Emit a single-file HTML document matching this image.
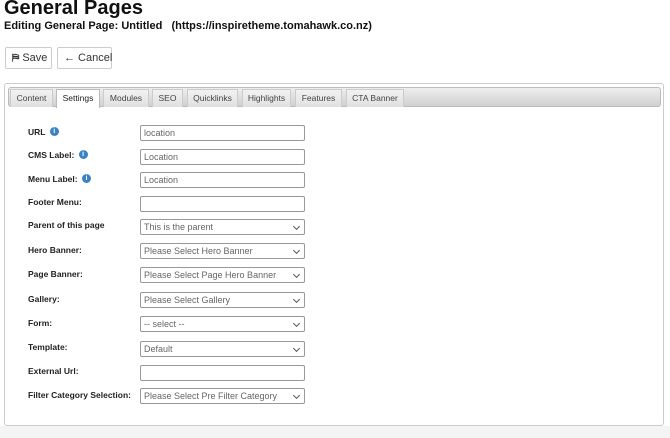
<!DOCTYPE html>
<html><head><style>
*{box-sizing:border-box;margin:0;padding:0}
body{width:670px;height:438px;background:#fff;font-family:"Liberation Sans",Arial,sans-serif;position:relative;overflow:hidden}
.abs{position:absolute}
h1{position:absolute;left:4px;top:-3px;font-size:20px;font-weight:bold;color:#111}
.sub{left:4px;top:20px;font-size:11px;font-weight:bold;color:#111}
.btn{position:absolute;top:47px;height:22px;border:1px solid #ccc;border-radius:2px;background:#fff;font-size:11px;color:#333;line-height:20px;padding-left:6px;white-space:nowrap}
.panel{left:4px;top:83px;width:660px;height:343px;border:1px solid #ccc;border-radius:3px;background:#fff}
.bar{left:8px;top:87px;width:653px;height:20px;border:1px solid #bbb;border-radius:3px;background:linear-gradient(#eee,#d0d0d0)}
.tab{position:absolute;top:89px;height:18px;border:1px solid #ccc;border-bottom:none;background:linear-gradient(#f2f2f2,#e0e0e0);font-size:8.5px;color:#444;text-align:center;line-height:17px}
.tab.act{background:#fff;color:#222;height:19px;border-color:#bbb}
.lbl{position:absolute;left:28px;font-size:8.5px;font-weight:bold;color:#222;line-height:10px}
.inp{position:absolute;left:140px;width:165px;height:16px;border:1px solid #999;border-radius:2px;background:#fff;font-size:9px;color:#666;padding-left:3px;line-height:14px}
.inp.s:after{content:"";position:absolute;right:5px;top:4px;width:4px;height:4px;border-right:1.2px solid #555;border-bottom:1.2px solid #555;transform:rotate(45deg)}
.i{display:inline-block;width:9px;height:9px;border-radius:50%;background:#3b82c4;color:#fff;font-size:7px;text-align:center;line-height:9px;vertical-align:top;margin-left:2px;font-weight:bold}
</style></head><body>
<h1>General Pages</h1>
<div class="abs sub">Editing General Page: Untitled &nbsp;&nbsp;(https://inspiretheme.tomahawk.co.nz)</div>
<div class="btn" style="left:5px;width:47px"><b style="font-size:10px">⛿</b> Save</div>
<div class="btn" style="left:57px;width:55px"><b>←</b> Cancel</div>
<div class="abs" style="left:0;top:426px;width:670px;height:12px;background:#f4f4f4"></div>
<div class="abs panel"></div>
<div class="abs bar"></div>
<div class="tab" style="left:10px;width:43px">Content</div>
<div class="tab act" style="left:56px;width:44px">Settings</div>
<div class="tab" style="left:103px;width:46px">Modules</div>
<div class="tab" style="left:152px;width:31px">SEO</div>
<div class="tab" style="left:187px;width:51px">Quicklinks</div>
<div class="tab" style="left:242px;width:49px">Highlights</div>
<div class="tab" style="left:295px;width:47px">Features</div>
<div class="tab" style="left:346px;width:58px">CTA Banner</div>

<div class="lbl" style="top:127px">URL <span class="i">i</span></div><div class="inp" style="top:125px">location</div>
<div class="lbl" style="top:150px">CMS Label: <span class="i">i</span></div><div class="inp" style="top:149px">Location</div>
<div class="lbl" style="top:174px">Menu Label: <span class="i">i</span></div><div class="inp" style="top:172px">Location</div>
<div class="lbl" style="top:197px">Footer Menu:</div><div class="inp" style="top:196px"></div>
<div class="lbl" style="top:220px">Parent of this page</div><div class="inp s" style="top:219px">This is the parent</div>
<div class="lbl" style="top:245px">Hero Banner:</div><div class="inp s" style="top:243px">Please Select Hero Banner</div>
<div class="lbl" style="top:269px">Page Banner:</div><div class="inp s" style="top:267px">Please Select Page Hero Banner</div>
<div class="lbl" style="top:294px">Gallery:</div><div class="inp s" style="top:292px">Please Select Gallery</div>
<div class="lbl" style="top:318px">Form:</div><div class="inp s" style="top:316px">-- select --</div>
<div class="lbl" style="top:342px">Template:</div><div class="inp s" style="top:341px">Default</div>
<div class="lbl" style="top:366px">External Url:</div><div class="inp" style="top:365px"></div>
<div class="lbl" style="top:390px">Filter Category Selection:</div><div class="inp s" style="top:388px">Please Select Pre Filter Category</div>
</body></html>
